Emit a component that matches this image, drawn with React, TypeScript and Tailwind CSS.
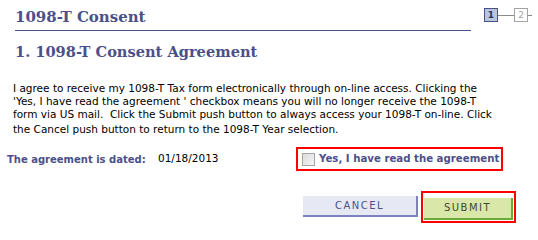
import * as React from 'react';

const serif = "font-['DejaVu_Serif','Liberation_Serif',serif]";
const sans = "font-['DejaVu_Sans','Liberation_Sans',sans-serif]";

function StepBox({ n, active }: { n: number; active?: boolean }) {
  return (
    <div
      className={
        active
          ? 'flex h-[14px] w-[14px] items-center justify-center border border-[#4b5089] bg-[#b8c6dd] text-[9px] font-bold leading-none text-[#2c3160]'
          : 'flex h-[14px] w-[14px] items-center justify-center border border-[#a3a3a3] bg-white text-[9px] leading-none text-[#a3a3a3]'
      }
    >
      {n}
    </div>
  );
}

export default function App() {
  return (
    <div className={`relative h-[226px] w-[538px] overflow-hidden bg-white ${sans}`}>
      {/* Page title + step indicator */}
      <div className="flex h-[31px] items-start">
        <div className="ml-[15px] flex h-[31px] w-[456px] items-end border-b border-[#4b5089] pb-[5px]">
          <span className={`${serif} text-[15px] font-bold leading-none text-[#4b5089]`}>
            1098-T Consent
          </span>
        </div>
        <div className="ml-[13px] mt-[8px] flex items-center">
          <StepBox n={1} active />
          <div className="h-px w-[16px] bg-[#8a8a8a]" />
          <StepBox n={2} />
          <div className="h-px w-[4px] bg-[#8a8a8a]" />
        </div>
      </div>

      {/* Section heading */}
      <h1 className={`${serif} ml-[15px] mt-[11px] whitespace-nowrap text-[14.6px] font-bold leading-[20px] text-[#4b5089]`}>
        1. 1098-T Consent Agreement
      </h1>

      {/* Agreement text */}
      <div className="ml-[13px] mt-[20px] whitespace-pre text-[10.5px] leading-[13px] text-black">
        <div>I agree to receive my 1098-T Tax form electronically through on-line access. Clicking the</div>
        <div>'Yes, I have read the agreement ' checkbox means you will no longer receive the 1098-T</div>
        <div>form via US mail.  Click the Submit push button to always access your 1098-T on-line. Click</div>
        <div className="mt-[2px]">the Cancel push button to return to the 1098-T Year selection.</div>
      </div>

      {/* Date + confirmation checkbox */}
      <div className="mt-[11px] flex items-center whitespace-nowrap">
        <span className="ml-[7px] w-[151px] text-[10px] font-bold text-[#4b5089]">The agreement is dated:</span>
        <span className="w-[138px] text-[10.5px] text-black">01/18/2013</span>
        <label className="flex h-[24px] w-[207px] items-center border-2 border-[#ff0000] pl-[4px]">
          <span className="h-[13px] w-[13px] shrink-0 border border-[#a5a5a5] bg-gradient-to-br from-[#dcdcdc] to-[#f4f4f4]" />
          <span className="ml-[4px] text-[10.2px] font-bold text-[#4b5089]">Yes, I have read the agreement</span>
        </label>
      </div>

      {/* Buttons */}
      <div className="mt-[20px] flex items-center">
        <button className="ml-[303px] h-[21px] w-[115px] border-b-2 border-r-2 border-[#7c82bf] bg-[#e6e9f4] text-[10px] tracking-[1.5px] text-[#4b5089]">
          CANCEL
        </button>
        <div className="ml-[3px] border-2 border-[#ff0000] p-px">
          <button className="h-[22px] w-[89px] border-b-2 border-r-2 border-[#6aaa3a] bg-[#d9e8a8] text-[10px] tracking-[1.5px] text-[#3b4a36]">
            SUBMIT
          </button>
        </div>
      </div>
    </div>
  );
}
